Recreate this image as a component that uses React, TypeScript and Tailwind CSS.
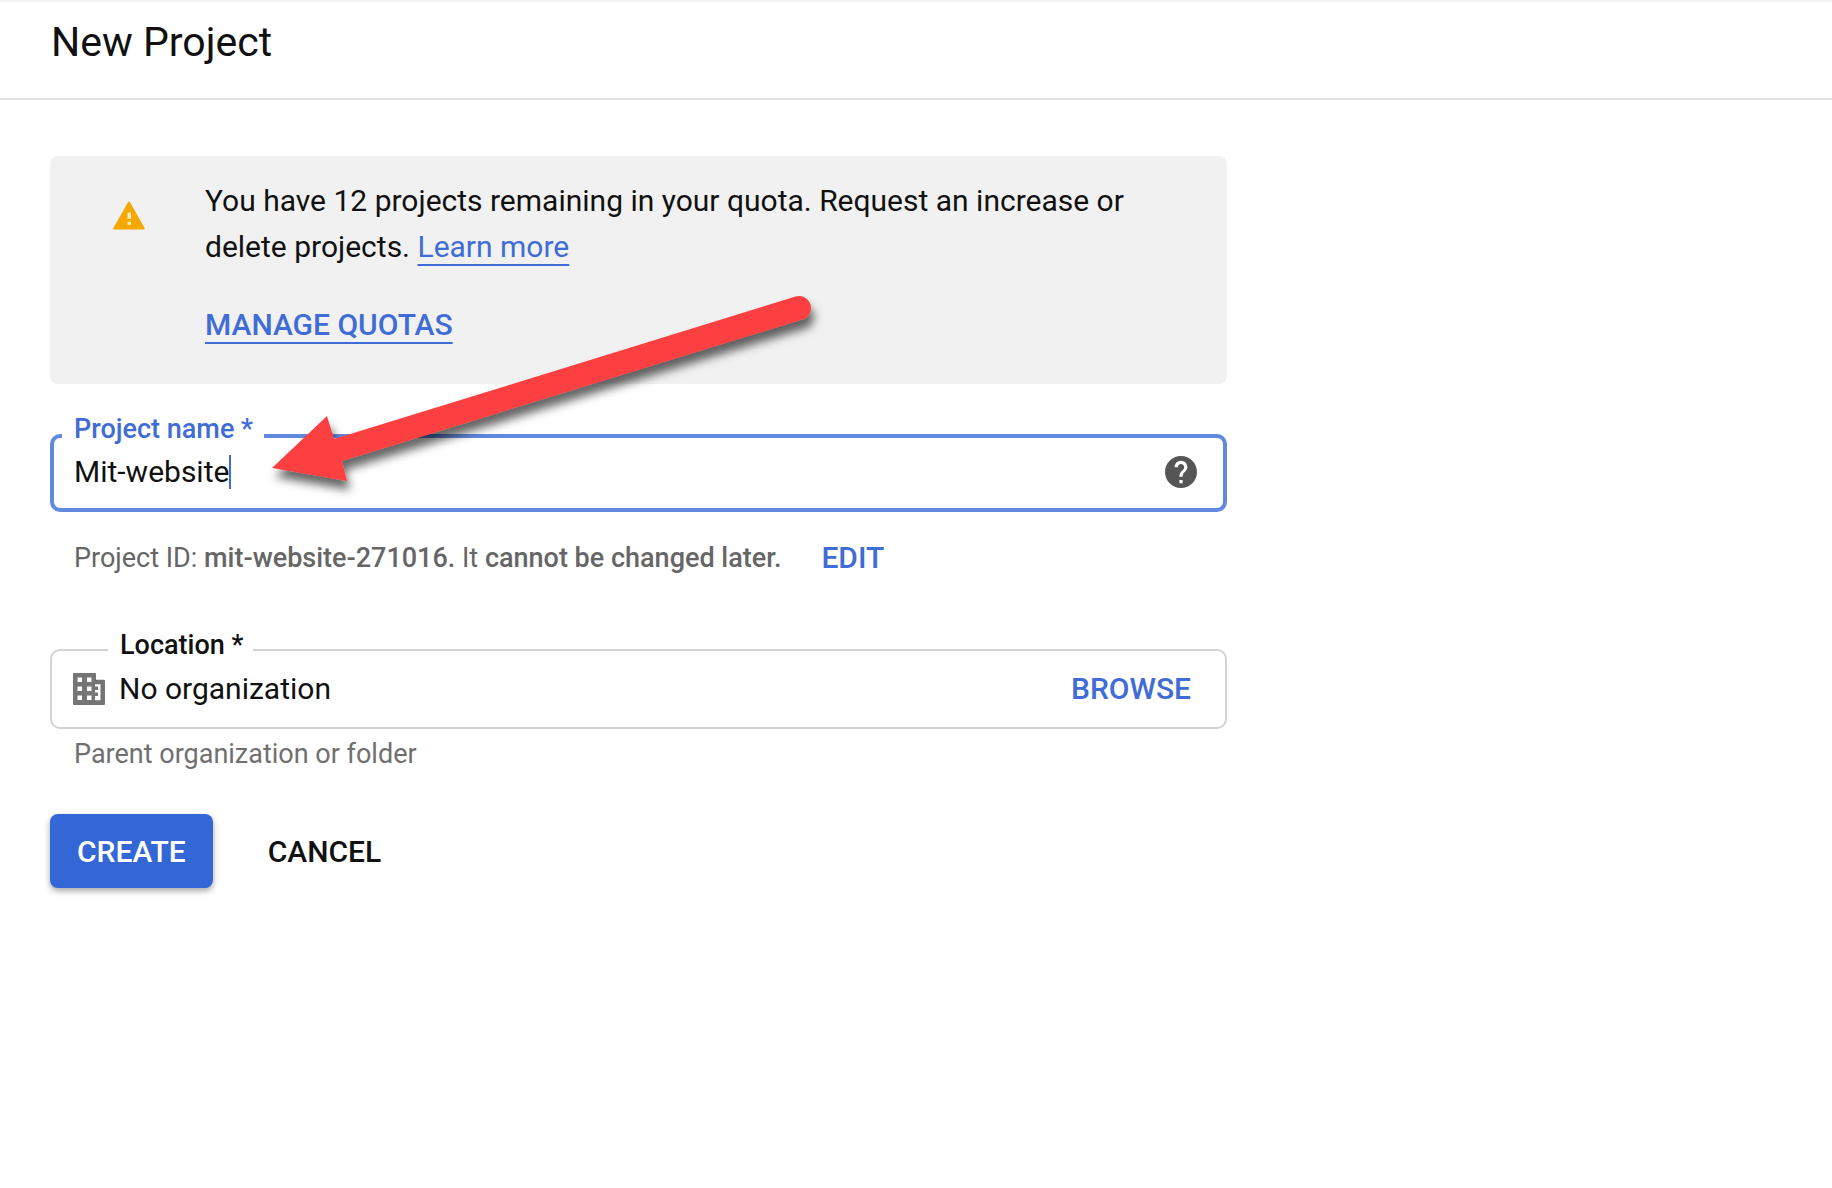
import { useState } from "react";

function WarningIcon() {
  return (
    <svg viewBox="0 0 32 29" className="mt-[23px] h-[29px] w-8 shrink-0" aria-hidden="true">
      <path
        d="M16 1.500 L30.700 27.500 H1.300 Z"
        fill="#f5a800"
        stroke="#f5a800"
        strokeWidth="2"
        strokeLinejoin="round"
      />
      <path d="M14.500 11.500h3.500v6.500h-3.500zM14.500 20.800h3.500v3h-3.500z" fill="#fce9c0" />
    </svg>
  );
}

function HelpIcon() {
  return (
    <svg viewBox="2 2 20 20" className="size-8" aria-hidden="true">
      <path
        fill="#555555"
        d="M12 2C6.48 2 2 6.48 2 12s4.48 10 10 10 10-4.48 10-10S17.52 2 12 2zm1 17h-2v-2h2v2zm2.07-7.75-.9.92C13.45 12.9 13 13.5 13 15h-2v-.5c0-1.1.45-2.1 1.17-2.83l1.24-1.26c.37-.36.59-.86.59-1.41 0-1.1-.9-2-2-2s-2 .9-2 2H8c0-2.21 1.79-4 4-4s4 1.79 4 4c0 .88-.36 1.68-.93 2.25z"
      />
    </svg>
  );
}

function OrganizationIcon() {
  return (
    <svg viewBox="0 0 32 32" className="size-8 shrink-0" aria-hidden="true">
      <path
        fill="#757575"
        fillRule="evenodd"
        d="M1 0H22Q23 0 23 1V6.700H31Q32 6.700 32 7.700V31Q32 32 31 32H1Q0 32 0 31V1Q0 0 1 0zM4.500 4.500v4.500h4.500v-4.500zM14 4.500v4.500h4.500v-4.500zM4.500 13.500v4.500h4.500v-4.500zM14 13.500v4.500h4.500v-4.500zM4.500 22.500v4.500h4.500v-4.500zM14 22.500v4.500h4.500v-4.500zM22 11.300v2.200h3v3.500h-3v2.500h3v3.500h-3v4.300h5.500v-16z"
      />
    </svg>
  );
}

function PointerArrow() {
  return (
    <svg
      viewBox="0 0 580 220"
      className="pointer-events-none absolute left-[252px] top-[282px] h-[220px] w-[580px]"
      aria-hidden="true"
    >
      <defs>
        <filter id="arrow-shadow" x="-10%" y="-10%" width="120%" height="130%">
          <feDropShadow dx="3" dy="9" stdDeviation="5" floodColor="#000000" floodOpacity="0.6" />
        </filter>
      </defs>
      <path
        d="M20 184 L75 132 L82 155 L543.500 12.500 A12 12 0 0 1 550.500 35.500 L90 177 L95 197 Z"
        fill="#fc4142"
        filter="url(#arrow-shadow)"
      />
    </svg>
  );
}

export default function App() {
  const [name, setName] = useState("Mit-website");

  return (
    <div className="relative min-h-screen border-t-2 border-[#f3f3f3] bg-white font-[Roboto,sans-serif] text-[30px] leading-[46px] text-[#111111]">
      <header className="border-b-2 border-[#e2e2e2] px-[51px] pt-[13px] pb-[29px]">
        <h1 className="text-[41px] leading-[54px]">New Project</h1>
      </header>

      <main className="w-full max-w-[1277px] px-[50px] pt-14">
        <section className="flex rounded-lg bg-[#f1f1f1] pt-[22px] pr-[60px] pb-9 pl-[63px]">
          <WarningIcon />
          <div className="ml-[60px]">
            <p>
              You have 12 projects remaining in your quota. Request an increase or delete projects.{" "}
              <a
                href="#learn"
                className="text-[#3f6cd6] underline decoration-2 underline-offset-[7px] [text-decoration-skip-ink:none]"
              >
                Learn more
              </a>
            </p>
            <a
              href="#quotas"
              className="mt-8 inline-block font-medium text-[#3f6cd6] underline decoration-2 underline-offset-[7px] [text-decoration-skip-ink:none]"
            >
              MANAGE QUOTAS
            </a>
          </div>
        </section>

        <form onSubmit={(e) => e.preventDefault()}>
          <div className="relative mt-[50px] flex h-[78px] items-center rounded-[10px] border-4 border-[#6189dc] pr-[26px] pb-[2px] pl-5">
            <label
              htmlFor="project-name"
              className="absolute -top-[29px] left-2 bg-white pr-[11px] pl-3 text-[27px] leading-[40px] font-medium text-[#3f6cd6]"
            >
              Project name *
            </label>
            <input
              id="project-name"
              value={name}
              onChange={(e) => setName(e.target.value)}
              className="[field-sizing:content] h-[46px] max-w-full bg-transparent caret-transparent outline-none"
            />
            <span className="h-[34px] w-[2px] bg-[#3f6cd6]" />
            <button type="button" aria-label="Help" className="ml-auto">
              <HelpIcon />
            </button>
          </div>

          <p className="mt-[23px] flex pl-6 text-[#666666]">
            <span className="text-[27px]">
              Project ID: <span className="font-medium">mit-website-271016.</span> It{" "}
              <span className="font-medium">cannot be changed later.</span>
            </span>
            <button type="button" className="ml-10 font-medium text-[#3f6cd6]">
              EDIT
            </button>
          </p>

          <div className="relative mt-[68px] flex h-20 items-center rounded-[10px] border-2 border-[#d3d3d3] pr-[34px] pl-[21px]">
            <label
              htmlFor="location"
              className="absolute -top-[29px] left-14 bg-white pr-[10px] pl-3 text-[27px] leading-[46px] font-medium"
            >
              Location *
            </label>
            <OrganizationIcon />
            <input
              id="location"
              readOnly
              defaultValue="No organization"
              className="ml-[14px] h-[46px] min-w-0 flex-1 bg-transparent outline-none"
            />
            <button type="button" className="font-medium text-[#3f6cd6]">
              BROWSE
            </button>
          </div>
          <p className="mt-[2px] pl-6 text-[27px] text-[#707070]">Parent organization or folder</p>

          <div className="mt-[37px] flex items-center gap-7">
            <button
              type="submit"
              className="rounded-lg bg-[#3367d6] px-[27px] pt-[15px] pb-[13px] font-medium text-white shadow-[0_3px_6px_rgba(0,0,0,0.35)]"
            >
              CREATE
            </button>
            <button type="button" className="px-[27px] pt-[15px] pb-[13px] font-medium">
              CANCEL
            </button>
          </div>
        </form>
      </main>

      <PointerArrow />
    </div>
  );
}
